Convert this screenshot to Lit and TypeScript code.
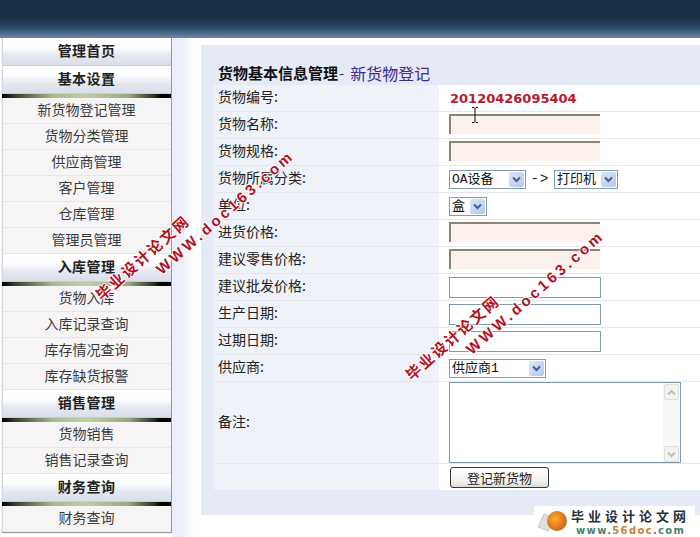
import { LitElement, html, css, svg } from "lit";
import { customElement } from "lit/decorators.js";

const MENU: { head: string; items: string[]; bar: boolean }[] = [
  { head: "管理首页", items: [], bar: false },
  { head: "基本设置", items: ["新货物登记管理", "货物分类管理", "供应商管理", "客户管理", "仓库管理", "管理员管理"], bar: true },
  { head: "入库管理", items: ["货物入库", "入库记录查询", "库存情况查询", "库存缺货报警"], bar: true },
  { head: "销售管理", items: ["货物销售", "销售记录查询"], bar: true },
  { head: "财务查询", items: ["财务查询"], bar: true },
];

const chevron = (up = false, color = "#3f5f9c") => svg`<svg width="9" height="7" viewBox="0 0 9 7"><path d=${up ? "M1 5.5 4.5 2 8 5.5" : "M1 1.5 4.5 5 8 1.5"} fill="none" stroke=${color} stroke-width="2"/></svg>`;

@customElement("app-root")
export class AppRoot extends LitElement {
  static styles = css`
    :host { display: block; width: 700px; height: 537px; overflow: hidden; position: relative; background: #fff; font-family: "Noto Sans CJK SC", "Liberation Sans", sans-serif; font-size: 14px; color: #222; }
    .top { height: 38px; background: linear-gradient(#1c3048 0, #1c3048 18px, #2c4a68 28px, #6a8aa8 38px); }
    .body { display: flex; height: 499px; }
    .side { width: 168px; margin-left: 2px; flex: none; display: flex; flex-direction: column; border-left: 1px solid #d3d7e0; border-right: 1px solid #8e9aa8; align-self: flex-start; box-sizing: content-box; box-shadow: 0 1px 1px #9aa4b0; }
    .head { height: 28px; box-sizing: border-box; display: flex; align-items: center; justify-content: center; padding: 0 1px 3px 0; font-weight: 700; font-size: 14px; letter-spacing: .4px; color: #222; background: linear-gradient(#fff 0, #fdfdfe 35%, #e4e8f0 65%, #d9dee9 100%); border-bottom: 1px solid #c6ccd8; }
    .bar { height: 4px; margin-left: -1px; background: linear-gradient(90deg, #000 0, #39402e 8%, #a9b98e 30%, #c0cea6 50%, #99a97e 75%, #2a2e20 90%, #000 94%); }
    .item { height: 26px; box-sizing: border-box; display: flex; align-items: center; justify-content: center; padding: 0 1px 4px 0; background: #f7f4f6; border-bottom: 1px solid #e6e5ea; color: #3a3a3a; }
    .strip { width: 21px; flex: none; background: linear-gradient(90deg, #eceffa 0, #eceffa 57%, #f3f5fc 60%, #fff 100%); }
    .main { flex: 1; padding: 7px 0 0 8px; min-width: 0; }
    .panel { height: 470px; box-sizing: border-box; background: #e6eaf6; padding: 15px 0 0 13px; }
    .title { height: 25px; box-sizing: border-box; display: flex; align-items: center; padding-left: 4px; font-weight: 700; font-size: 15px; color: #111; }
    .title span { font-weight: 400; font-size: 16px; color: #3f2a90; }
    .title i { font-style: normal; font-weight: 400; margin: 0 6px 0 1px; color: #333; }
    .row { display: grid; grid-template-columns: 225px 1fr; height: 27px; box-sizing: border-box; border-bottom: 1px solid #e4e6ea; background: #fff; }
    .row.tall { height: 82px; }
    .row.last { height: 26px; border-bottom: 0; }
    .label { background: #eff2f8; display: flex; align-items: center; padding: 0 0 4px 4px; color: #222; }
    .val { display: flex; align-items: center; padding-left: 10px; gap: 4.6px; position: relative; }
    .num { font: 700 13px "DejaVu Sans", sans-serif; color: #b81a2c; padding-left: 1px; }
    input { display: block; width: 152px; height: 21px; box-sizing: border-box; margin: 0; padding: 0; outline: 0; border: 1px solid #7f9aa8; background: #fff; }
    input.req { width: 151px; height: 20px; margin-bottom: 2px; background: #fdf1ec; border: 0; border-top: 2px solid #8a8378; border-left: 2px solid #8a8378; }
    .sel { display: inline-flex; align-items: center; height: 19px; box-sizing: border-box; border: 1px solid #7f9db9; background: #fff; padding-right: 1px; }
    .sel select { appearance: none; -webkit-appearance: none; border: 0; outline: 0; background: transparent; height: 17px; padding: 0 0 0 2px; margin: 0; font: 13px "Liberation Mono", "Noto Sans CJK SC", sans-serif; color: #111; flex: 1; min-width: 0; }
    .arrow { width: 15px; height: 15px; flex: none; display: flex; align-items: center; justify-content: center; background: linear-gradient(135deg, #dbe6f8, #b4c8ec); border-radius: 2px; }
    .arrowtxt { font: 14px "Liberation Mono", monospace; letter-spacing: 1px; color: #222; }
    .ta { display: flex; width: 232px; height: 81px; box-sizing: border-box; border: 1px solid #7f9aa8; background: #fff; }
    .ta textarea { flex: 1; border: 0; outline: 0; resize: none; padding: 0; margin: 0; background: transparent; }
    .sb { width: 17px; flex: none; display: flex; flex-direction: column; justify-content: space-between; background: #f8f9f7; padding-top: 1px; }
    .sb div { height: 16px; margin: 0 1px; display: flex; align-items: center; justify-content: center; background: #f3f3ee; border: 1px solid #dedfda; border-radius: 2px; box-sizing: border-box; }
    button { width: 99px; height: 21px; box-sizing: border-box; margin: 0 0 0 1px; padding: 0 0 2px; border: 1px solid #2e3a3e; border-radius: 3px; background: linear-gradient(#fff, #f3f1ec 70%, #dcdad2); font: 13px "Noto Sans CJK SC", sans-serif; color: #222; }
    .ibeam { position: absolute; left: 471px; top: 107px; }
    .wm { position: absolute; width: 0; height: 0; }
    .wm span { position: absolute; left: 0; top: 0; white-space: nowrap; font-family: "Liberation Sans", "Noto Sans CJK SC", sans-serif; font-weight: 700; color: #b3101f; transform: translate(-50%, -50%) rotate(-41.5deg); text-shadow: 1px 0 #fff, -1px 0 #fff, 0 1px #fff, 0 -1px #fff; }
    .wm .cn { left: 142px; top: 257px; font-size: 15px; letter-spacing: 2px; }
    .wm .en { left: 225px; top: 212px; font-size: 15px; letter-spacing: 3.3px; }
    .logo { position: absolute; left: 534px; top: 506px; width: 161px; height: 31px; background: #fff; display: flex; padding-left: 2px; box-sizing: border-box; align-items: center; gap: 1px; }
    .logo svg { margin-bottom: 4px; }
    .logotext { display: flex; flex-direction: column; align-items: flex-start; }
    .l1 { font-size: 13px; font-weight: 700; letter-spacing: 4px; color: #26323a; line-height: 19px; }
    .l2 { font: 700 10px "DejaVu Sans", sans-serif; letter-spacing: 1.35px; color: #4f7f70; padding-left: 5px; line-height: 12px; }
    .l2 b { color: #c9822f; }
  `;

  private sel(w: number, opt: string) {
    return html`<span class="sel" style="width:${w}px"><select><option>${opt}</option></select><span class="arrow">${chevron()}</span></span>`;
  }

  private rows() {
    const inp = (req: boolean) => html`<input class=${req ? "req" : ""} />`;
    const r: [string, unknown][] = [
      ["货物编号:", html`<span class="num">20120426095404</span>`],
      ["货物名称:", inp(true)],
      ["货物规格:", inp(true)],
      ["货物所属分类:", html`${this.sel(77, "OA设备")}<span class="arrowtxt">-&gt;</span>${this.sel(64, "打印机")}`],
      ["单位:", this.sel(38, "盒")],
      ["进货价格:", inp(true)],
      ["建议零售价格:", inp(true)],
      ["建议批发价格:", inp(false)],
      ["生产日期:", inp(false)],
      ["过期日期:", inp(false)],
      ["供应商:", this.sel(97, "供应商1")],
    ];
    return r.map(([l, v]) => html`<div class="row"><div class="label">${l}</div><div class="val">${v}</div></div>`);
  }

  render() {
    return html`
      <div class="top"></div>
      <div class="body">
        <nav class="side">
          ${MENU.map(
            (g) => html`<div class="head">${g.head}</div>${g.bar ? html`<div class="bar"></div>` : ""}${g.items.map((i) => html`<div class="item">${i}</div>`)}`
          )}
        </nav>
        <div class="strip"></div>
        <main class="main">
          <div class="panel">
            <div class="title">货物基本信息管理<i>-</i><span>新货物登记</span></div>
            ${this.rows()}
            <div class="row tall">
              <div class="label">备注:</div>
              <div class="val"><div class="ta"><textarea></textarea><div class="sb"><div>${chevron(true, "#b9bec6")}</div><div>${chevron(false, "#b9bec6")}</div></div></div></div>
            </div>
            <div class="row last">
              <div class="label"></div>
              <div class="val"><button>登记新货物</button></div>
            </div>
          </div>
        </main>
      </div>
      <svg class="ibeam" width="8" height="16" viewBox="0 0 8 16"><path d="M1 .5h2l1 1 1-1h2M4 1.5v13M1 15.5h2l1-1 1 1h2" fill="none" stroke="#111"/></svg>
      ${[[0, 0], [310, 80]].map(
        ([x, y]) => html`<div class="wm" style="left:${x}px;top:${y}px"><span class="cn">毕业设计论文网</span><span class="en">WWW.doc163.com</span></div>`
      )}
      <div class="logo">
        <svg width="34" height="26" viewBox="0 0 34 26">
          <defs><radialGradient id="b" cx=".4" cy=".4" r=".7"><stop offset="0" stop-color="#f8b030"/><stop offset=".7" stop-color="#e0701a"/><stop offset="1" stop-color="#7a7a2a"/></radialGradient></defs>
          <path d="M2 20 8 7l9 3-5 14z" fill="#dfe0e2" stroke="#c4c5c8"/>
          <circle cx="21" cy="14" r="10" fill="url(#b)"/>
        </svg>
        <div class="logotext"><span class="l1">毕业设计论文网</span><span class="l2">www.<b>56doc</b>.com</span></div>
      </div>
    `;
  }
}
